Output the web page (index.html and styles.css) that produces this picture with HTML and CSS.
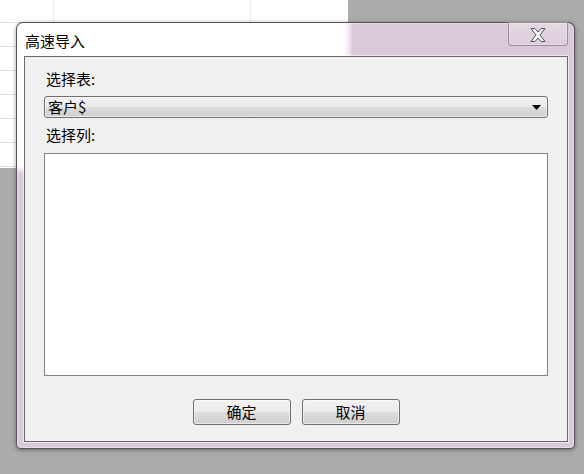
FILE: index.html
```html
<!DOCTYPE html>
<html lang="zh-CN">
<head>
<meta charset="utf-8">
<title>高速导入</title>
<link rel="stylesheet" href="styles.css">
</head>
<body>
<div class="desktop">
  <div class="sheet"></div>
  <div class="dialog">
    <div class="titlebar">
      <span class="title">高速导入</span>
      <button class="close" aria-label="关闭">
        <svg class="close-x" width="16" height="14" viewBox="0 0 16 14"><polygon points="1,0.5 5,0.5 8,4 11,0.5 15,0.5 10,7 15,13.5 11,13.5 8,10 5,13.5 1,13.5 6,7"/></svg>
      </button>
    </div>
    <div class="client">
      <div class="label">选择表:</div>
      <div class="combo">
        <span class="combo-text">客户$</span>
        <svg class="arrow" width="9" height="5" viewBox="0 0 9 5"><polygon points="0,0 9,0 4.5,5"/></svg>
      </div>
      <div class="label">选择列:</div>
      <div class="list"></div>
      <div class="buttons">
        <button class="btn">确定</button>
        <button class="btn">取消</button>
      </div>
    </div>
  </div>
</div>
</body>
</html>
```

FILE: styles.css
```css
html, body {
  margin: 0;
  padding: 0;
  background: #ababab;
}

.desktop {
  position: relative;
  width: 584px;
  height: 474px;
  overflow: hidden;
  background: #ababab;
  font-family: "Noto Sans CJK SC", "Noto Sans", sans-serif;
  font-size: 15px;
  color: #000;
}

.sheet {
  position: absolute;
  left: 0;
  top: 0;
  width: 348px;
  height: 168px;
  background-color: #fff;
  background-image:
    repeating-linear-gradient(to bottom, transparent 0 22px, #e2e2e2 22px 23px, transparent 23px 24px),
    repeating-linear-gradient(to right, transparent 0 53px, #ececec 53px 54px, transparent 54px 98.5px);
}

.dialog {
  position: absolute;
  left: 16px;
  top: 22px;
  width: 559px;
  height: 427px;
  box-sizing: border-box;
  border: 1px solid rgba(55, 52, 58, 0.8);
  border-radius: 7px 7px 5px 5px;
  display: flex;
  flex-direction: column;
  background:
    linear-gradient(to bottom, #fff, rgba(255, 255, 255, 0)) 0 143px / 8px 8px no-repeat,
    linear-gradient(to right, #fff 327px, #f6eef6 331px, #dac9d9 336px) 0 0 / 100% 143px no-repeat,
    #dac9d9;
  box-shadow: 0 1px 4px rgba(0, 0, 0, 0.4), inset 0 0 0 1px rgba(255, 255, 255, 0.35);
}

.titlebar {
  height: 33px;
  display: flex;
  align-items: flex-start;
  flex: none;
}

.title {
  margin-left: 8px;
  margin-top: 8px;
  line-height: 20px;
}

.close {
  margin: -1px 6px 0 auto;
  width: 60px;
  height: 24px;
  box-sizing: border-box;
  padding: 1px 0 0;
  border: 1px solid rgba(95, 82, 98, 0.55);
  border-radius: 0 0 4px 4px;
  background: linear-gradient(to bottom, #e4d8e3, #dccfdb);
  box-shadow: inset 0 0 0 1px rgba(255, 255, 255, 0.3);
  display: flex;
  align-items: center;
  justify-content: center;
}

.close-x polygon {
  fill: #f5f5f7;
  stroke: #545462;
  stroke-width: 1;
  stroke-linejoin: round;
}

.client {
  flex: 1;
  margin: 0 6px 6px 7px;
  box-sizing: border-box;
  border: 1px solid #6b6771;
  background: #f0f0f0;
  box-shadow: 0 0 0 1px rgba(255, 255, 255, 0.55);
  padding: 12px 19px 16px;
  display: flex;
  flex-direction: column;
}

.label {
  line-height: 20px;
  height: 20px;
  margin-left: 2px;
}

.combo {
  margin-top: 7px;
  margin-bottom: 7px;
  height: 22px;
  box-sizing: border-box;
  border: 1px solid #707070;
  border-radius: 3px;
  background: linear-gradient(to bottom, #f2f2f2 0%, #ebebeb 48%, #dcdcdc 52%, #d0d0d0 100%);
  box-shadow: inset 0 0 0 1px rgba(255, 255, 255, 0.55);
  display: flex;
  align-items: center;
  padding: 0 6px 0 3px;
}

.combo-text {
  line-height: 20px;
}

.arrow {
  margin-left: auto;
}

.arrow polygon {
  fill: #000;
}

.list {
  flex: 1;
  margin-top: 8px;
  box-sizing: border-box;
  border: 1px solid #828282;
  background: #fff;
}

.buttons {
  margin-top: 23px;
  display: flex;
  justify-content: center;
  gap: 11px;
}

.btn {
  width: 98px;
  height: 26px;
  box-sizing: border-box;
  padding: 0;
  margin: 0;
  border: 1px solid #707070;
  border-radius: 3px;
  background: linear-gradient(to bottom, #f2f2f2 0%, #ebebeb 48%, #dcdcdc 52%, #d0d0d0 100%);
  box-shadow: inset 0 0 0 1px rgba(255, 255, 255, 0.55);
  font-family: "Noto Sans CJK SC", "Noto Sans", sans-serif;
  font-size: 15px;
  line-height: 22px;
  color: #000;
}
```
